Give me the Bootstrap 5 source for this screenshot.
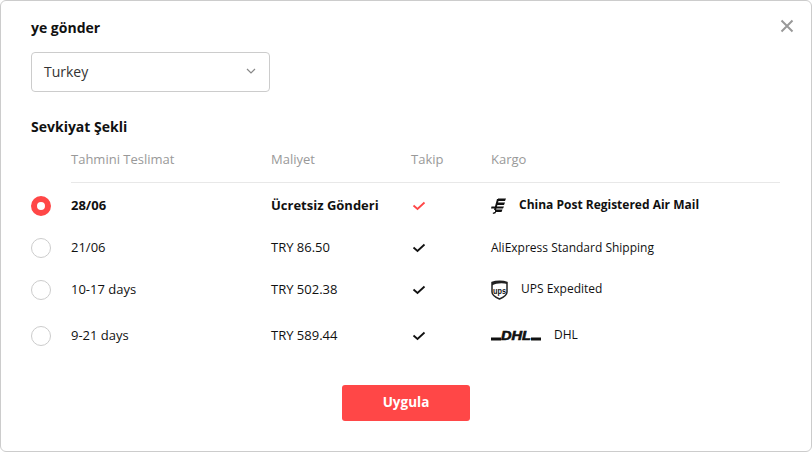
<!DOCTYPE html>
<html lang="tr">
<head>
    <meta charset="UTF-8">
    <meta name="viewport" content="width=device-width, initial-scale=1.0">
    <title>Sevkiyat</title>
    <link href="https://cdn.jsdelivr.net/npm/bootstrap@5.3.0/dist/css/bootstrap.min.css" rel="stylesheet">
    <style>
        html, body { height: 100%; background: #fff; }
        body { font-family: "Open Sans", "Liberation Sans", sans-serif; font-size: 13px; color: #111; }
        .ship-modal { height: 452px; background: #fff; border: 1px solid #ccc; border-radius: 6px; padding: 17px 31px 0 30px; }
        .ship-close { top: 18px; right: 17px; line-height: 0; }
        .ship-title { font-size: 14px; font-weight: 700; line-height: 19px; margin: 0; }
        .ship-select { width: 239px; height: 40px; margin-top: 15px; border: 1px solid #ccc; border-radius: 4px; padding: 0 13px 2px 12px; font-size: 14px; color: #333; }
        .ship-title-method { margin-top: 25px; }
        .ship-head { height: 47px; margin-left: 40px; border-bottom: 1px solid #e8e8e8; color: #999; padding-bottom: 13px; }
        .ship-rows { margin-top: 2px; }
        .ship-row { height: 42px; }
        .ship-row-tall { margin-top: 4px; }
        .col-date { width: 200px; flex: none; }
        .col-cost { width: 140px; flex: none; }
        .col-track { width: 80px; flex: none; }
        .col-track svg { display: block; margin-left: 1px; }
        .col-radio { width: 40px; flex: none; line-height: 0; }
        .col-carrier { font-size: 12px; }
        .col-carrier span { margin-bottom: 2px; }
        .ship-radio { display: inline-block; width: 20px; height: 20px; border: 1px solid #ccc; border-radius: 50%; }
        .ship-radio-on { border: 6px solid #ff4747; }
        .logo-gap { margin-right: 13px; overflow: visible; }
        .dhl-word { font-family: "Liberation Sans", sans-serif; font-size: 12px; font-weight: 700; font-style: italic; }
        .ups-word { font-family: "Liberation Sans", sans-serif; font-size: 9px; font-weight: 700; }
        .ship-apply { width: 128px; height: 36px; background: #ff4747; border: 0; border-radius: 3px; color: #fff; font-size: 13.5px; font-weight: 700; margin-top: 28px; padding: 0 0 2px 1px; }
        .ship-apply:hover { background: #f03c3c; color: #fff; }
    </style>
</head>
<body>
    <main class="ship-modal position-relative overflow-hidden">
        <button type="button" class="ship-close position-absolute btn p-0 border-0" aria-label="Kapat">
            <svg width="14" height="14" viewBox="0 0 14 14"><path d="M1.500 1.500l11 11M12.500 1.500l-11 11" stroke="#999" stroke-width="2" fill="none"/></svg>
        </button>

        <h2 class="ship-title">ye gönder</h2>
        <div class="ship-select d-flex align-items-center justify-content-between">
            <span>Turkey</span>
            <svg width="10" height="6" viewBox="0 0 10 6"><path d="M1 1l4 4 4-4" stroke="#888" stroke-width="1.200" fill="none"/></svg>
        </div>

        <h2 class="ship-title ship-title-method">Sevkiyat Şekli</h2>

        <div class="ship-head d-flex align-items-end">
            <div class="col-date">Tahmini Teslimat</div>
            <div class="col-cost">Maliyet</div>
            <div class="col-track">Takip</div>
            <div>Kargo</div>
        </div>

        <div class="ship-rows">
            <div class="ship-row d-flex align-items-center fw-bold">
                <div class="col-radio"><span class="ship-radio ship-radio-on"></span></div>
                <div class="col-date">28/06</div>
                <div class="col-cost">Ücretsiz Gönderi</div>
                <div class="col-track"><svg width="14" height="10" viewBox="0 0 14 10"><path d="M1.500 4.500L5.500 8 12.500 1.500" stroke="#ff4747" stroke-width="1.800" fill="none"/></svg></div>
                <div class="col-carrier d-flex align-items-center">
                    <svg class="logo-gap" width="15" height="16" viewBox="0 0 15 16"><path d="M7 .5h8l-1 2.500H6.500zM5.500 4.500H14l-1 2.500H5zM.5 8.500H13l-1 2H0zM4 11.500h7.500l-1 2.500H4zM1.500 15l3-1.500.5 1.500-2.500 1zM6 1L8 1 5 12H3z" fill="#111"/></svg>
                    <span>China Post Registered Air Mail</span>
                </div>
            </div>

            <div class="ship-row d-flex align-items-center">
                <div class="col-radio"><span class="ship-radio"></span></div>
                <div class="col-date">21/06</div>
                <div class="col-cost">TRY 86.50</div>
                <div class="col-track"><svg width="14" height="10" viewBox="0 0 14 10"><path d="M1.500 4.500L5.500 8 12.500 1.500" stroke="#111" stroke-width="1.800" fill="none"/></svg></div>
                <div class="col-carrier">AliExpress Standard Shipping</div>
            </div>

            <div class="ship-row d-flex align-items-center">
                <div class="col-radio"><span class="ship-radio"></span></div>
                <div class="col-date">10-17 days</div>
                <div class="col-cost">TRY 502.38</div>
                <div class="col-track"><svg width="14" height="10" viewBox="0 0 14 10"><path d="M1.500 4.500L5.500 8 12.500 1.500" stroke="#111" stroke-width="1.800" fill="none"/></svg></div>
                <div class="col-carrier d-flex align-items-center">
                    <svg class="logo-gap" width="17" height="20" viewBox="0 0 17 20"><path d="M1 2.500C5 .7 12 .7 16 2.500V12c0 3.500-4 5.500-7.500 7C5 17.500 1 15.500 1 12z" fill="#fff" stroke="#222" stroke-width="1.500"/><path d="M1 2.500C5 .7 12 .7 16 2.500V4C12 2.800 5 3 1 5.500z" fill="#222"/><text class="ups-word" x="8.500" y="13.500" text-anchor="middle" textLength="13" lengthAdjust="spacingAndGlyphs" fill="#111">ups</text></svg>
                    <span>UPS Expedited</span>
                </div>
            </div>

            <div class="ship-row ship-row-tall d-flex align-items-center">
                <div class="col-radio"><span class="ship-radio"></span></div>
                <div class="col-date">9-21 days</div>
                <div class="col-cost">TRY 589.44</div>
                <div class="col-track"><svg width="14" height="10" viewBox="0 0 14 10"><path d="M1.500 4.500L5.500 8 12.500 1.500" stroke="#111" stroke-width="1.800" fill="none"/></svg></div>
                <div class="col-carrier d-flex align-items-center">
                    <svg class="logo-gap" width="50" height="10" viewBox="0 0 50 10"><path d="M0 6.500h10v3H0zM40 6.500h10v3H40z" fill="#111"/><text class="dhl-word" x="25" y="9" text-anchor="middle" textLength="30" lengthAdjust="spacingAndGlyphs" fill="#111" stroke="#111" stroke-width=".6">DHL</text></svg>
                    <span>DHL</span>
                </div>
            </div>
        </div>

        <div class="text-center">
            <button type="button" class="ship-apply btn">Uygula</button>
        </div>
    </main>

    <script src="https://cdn.jsdelivr.net/npm/bootstrap@5.3.0/dist/js/bootstrap.bundle.min.js"></script>
</body>
</html>
